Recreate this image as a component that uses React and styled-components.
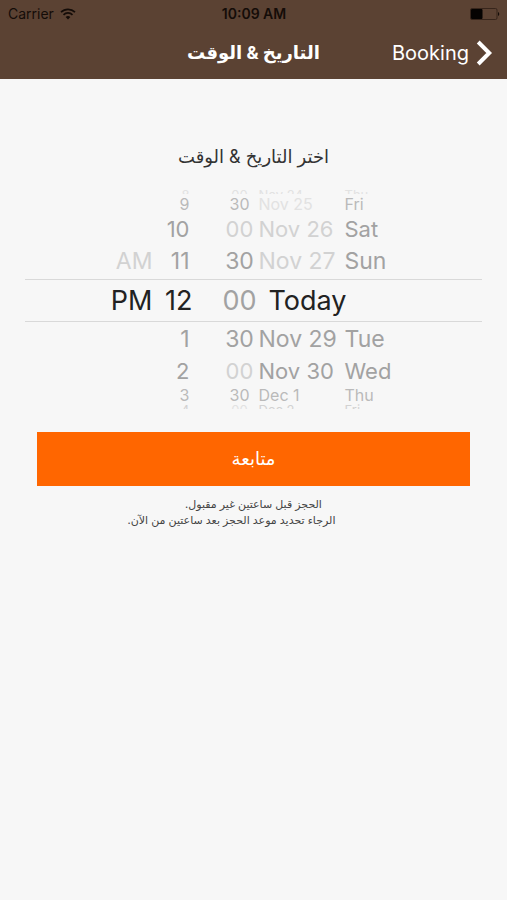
import React from "react";
import styled, { createGlobalStyle } from "styled-components";

const GlobalStyle = createGlobalStyle`
  * { box-sizing: border-box; }
  body {
    margin: 0;
    background: #f7f7f7;
    color: #333;
    font-family: Inter, "DejaVu Sans", sans-serif;
  }
`;

const Page = styled.div`
  display: flex;
  flex-direction: column;
  min-height: 100vh;
`;

const Header = styled.header`
  background: #5b4233;
`;

const StatusBar = styled.div`
  display: grid;
  grid-template-columns: 1fr auto 1fr;
  align-items: center;
  height: 27px;
  padding: 0 7px 0 8px;
  color: #140c08;
  font-size: 14px;
`;

const Carrier = styled.span`
  display: flex;
  align-items: center;
  gap: 6px;
`;

const Clock = styled.span`
  font-weight: 600;
`;

const BatteryIcon = styled.svg`
  justify-self: end;
`;

const NavBar = styled.nav`
  display: grid;
  grid-template-columns: 1fr auto 1fr;
  align-items: center;
  height: 52px;
  padding: 0 14px;
  color: #fff;
`;

const Title = styled.h1`
  grid-column: 2;
  margin: 0;
  font-size: 18px;
  font-weight: 700;
  line-height: 28px;
`;

const BackButton = styled.button`
  display: flex;
  align-items: center;
  justify-self: end;
  gap: 7px;
  padding: 0;
  border: 0;
  background: none;
  color: #fff;
  font: 400 20px/28px Inter, sans-serif;
  cursor: pointer;
`;

const Main = styled.main`
  display: flex;
  flex-direction: column;
  padding-top: 64px;
`;

const Prompt = styled.h2`
  margin: 0 0 18px;
  font-size: 18px;
  font-weight: 400;
  line-height: 28px;
  text-align: center;
`;

const Wheel = styled.div`
  margin: 0 25px;
  overflow: hidden;
`;

const WheelRow = styled.div`
  display: grid;
  grid-template-columns: 42px 40px 28px 38px 86px 52px;
  justify-content: center;
  align-items: ${(p) => p.$align || "center"};
  height: ${(p) => p.$height}px;
  overflow: hidden;
  border: solid #d9d9d9;
  border-width: ${(p) => (p.$selected ? "1px 0" : "0")};
  font-size: ${(p) => p.$size}px;
  line-height: 1;
  white-space: nowrap;
`;

const tones = {
  strong: "#222",
  mid: "#a2a2a2",
  soft: "#bababa",
  pale: "#d2d2d2",
  faint: "#e2e2e2",
};

const Cell = styled.span`
  color: ${(p) => tones[p.$tone]};
`;

const EndCell = styled(Cell)`
  padding-right: ${(p) => (p.$inset ? 3 : 0)}px;
  text-align: right;
`;

const MinuteCell = styled(Cell)`
  grid-column: 4;
  text-align: center;
`;

const TodayCell = styled(Cell)`
  grid-column: 5 / 7;
  padding-left: 10px;
`;

const Form = styled.form`
  display: flex;
  flex-direction: column;
  margin: 23px 37px 0;
`;

const Submit = styled.button`
  height: 54px;
  border: 0;
  background: #ff6600;
  color: #fff;
  font: 400 18px/28px "DejaVu Sans", sans-serif;
  cursor: pointer;
`;

const Notes = styled.div`
  display: flex;
  flex-direction: column;
  align-items: center;
  margin-top: 10px;
  color: #444;
  font-size: 11px;
  line-height: 16px;
`;

const Note = styled.p`
  margin: 0;
  padding-right: ${(p) => (p.$wide ? 44 : 0)}px;
`;

const rows = [
  { id: "r1", h: 5, size: 13, align: "end", hour: "8", min: "00", date: "Nov 24", day: "Thu", t: ["faint", "faint", "faint", "faint"] },
  { id: "r2", h: 20, size: 16, hour: "9", min: "30", date: "Nov 25", day: "Fri", t: ["soft", "soft", "faint", "soft"] },
  { id: "r3", h: 29, size: 22, hour: "10", min: "00", date: "Nov 26", day: "Sat", t: ["mid", "pale", "pale", "mid"] },
  { id: "r4", h: 36, size: 23, half: "AM", hour: "11", min: "30", date: "Nov 27", day: "Sun", t: ["mid", "mid", "pale", "mid"] },
  { id: "r5", h: 43, size: 27, selected: true, half: "PM", hour: "12", min: "00", today: "Today", t: ["strong", "mid", "strong"] },
  { id: "r6", h: 34, size: 23, hour: "1", min: "30", date: "Nov 29", day: "Tue", t: ["mid", "mid", "mid", "mid"] },
  { id: "r7", h: 30, size: 22, hour: "2", min: "00", date: "Nov 30", day: "Wed", t: ["mid", "pale", "mid", "mid"] },
  { id: "r8", h: 18, size: 16, hour: "3", min: "30", date: "Dec 1", day: "Thu", t: ["soft", "soft", "soft", "soft"] },
  { id: "r9", h: 5, size: 13, align: "start", hour: "4", min: "00", date: "Dec 2", day: "Fri", t: ["pale", "faint", "pale", "pale"] },
];

function WifiIcon() {
  return (
    <svg width="16" height="12" viewBox="0 0 16 12" aria-hidden="true">
      <path d="M1 4.2a10 10 0 0 1 14 0M3.5 6.8a6.4 6.4 0 0 1 9 0" fill="none" stroke="currentColor" strokeWidth="1.7" />
      <path d="M5.6 9.1a3.4 3.4 0 0 1 4.8 0L8 11.6z" fill="currentColor" />
    </svg>
  );
}

function Battery() {
  return (
    <BatteryIcon width="30" height="12" viewBox="0 0 30 12" role="img" aria-label="Battery">
      <rect x="0.5" y="0.5" width="26.5" height="11" rx="1.5" fill="none" stroke="#37251b" />
      <rect x="1" y="1" width="11.5" height="10" rx="1" fill="#050302" />
      <path d="M28 4a2.2 2.2 0 0 1 0 4z" fill="#140c08" />
    </BatteryIcon>
  );
}

function Chevron() {
  return (
    <svg width="17" height="26" viewBox="0 0 17 26" aria-hidden="true">
      <path d="M2.2 2 13.2 13 2.2 24" fill="none" stroke="currentColor" strokeWidth="4" />
    </svg>
  );
}

export default function App() {
  return (
    <Page>
      <GlobalStyle />
      <Header>
        <StatusBar>
          <Carrier>Carrier <WifiIcon /></Carrier>
          <Clock>10:09 AM</Clock>
          <Battery />
        </StatusBar>
        <NavBar>
          <Title dir="rtl" lang="ar">التاريخ &amp; الوقت</Title>
          <BackButton type="button">Booking <Chevron /></BackButton>
        </NavBar>
      </Header>
      <Main>
        <Prompt dir="rtl" lang="ar">اختر التاريخ &amp; الوقت</Prompt>
        <Wheel role="listbox" aria-label="اختر التاريخ & الوقت">
          {rows.map((r) => (
            <WheelRow
              key={r.id}
              role="option"
              aria-selected={Boolean(r.selected)}
              $height={r.h}
              $size={r.size}
              $align={r.align}
              $selected={r.selected}
            >
              <EndCell $tone={r.selected ? "strong" : "pale"}>{r.half}</EndCell>
              <EndCell $tone={r.t[0]} $inset={!r.selected}>{r.hour}</EndCell>
              <MinuteCell $tone={r.t[1]}>{r.min}</MinuteCell>
              {r.today ? (
                <TodayCell $tone={r.t[2]}>{r.today}</TodayCell>
              ) : (
                <>
                  <Cell $tone={r.t[2]}>{r.date}</Cell>
                  <Cell $tone={r.t[3]}>{r.day}</Cell>
                </>
              )}
            </WheelRow>
          ))}
        </Wheel>
        <Form onSubmit={(e) => e.preventDefault()}>
          <Submit type="submit" lang="ar">متابعة</Submit>
          <Notes dir="rtl" lang="ar">
            <Note>الحجز قبل ساعتين غير مقبول.</Note>
            <Note $wide>الرجاء تحديد موعد الحجز بعد ساعتين من الآن.</Note>
          </Notes>
        </Form>
      </Main>
    </Page>
  );
}
